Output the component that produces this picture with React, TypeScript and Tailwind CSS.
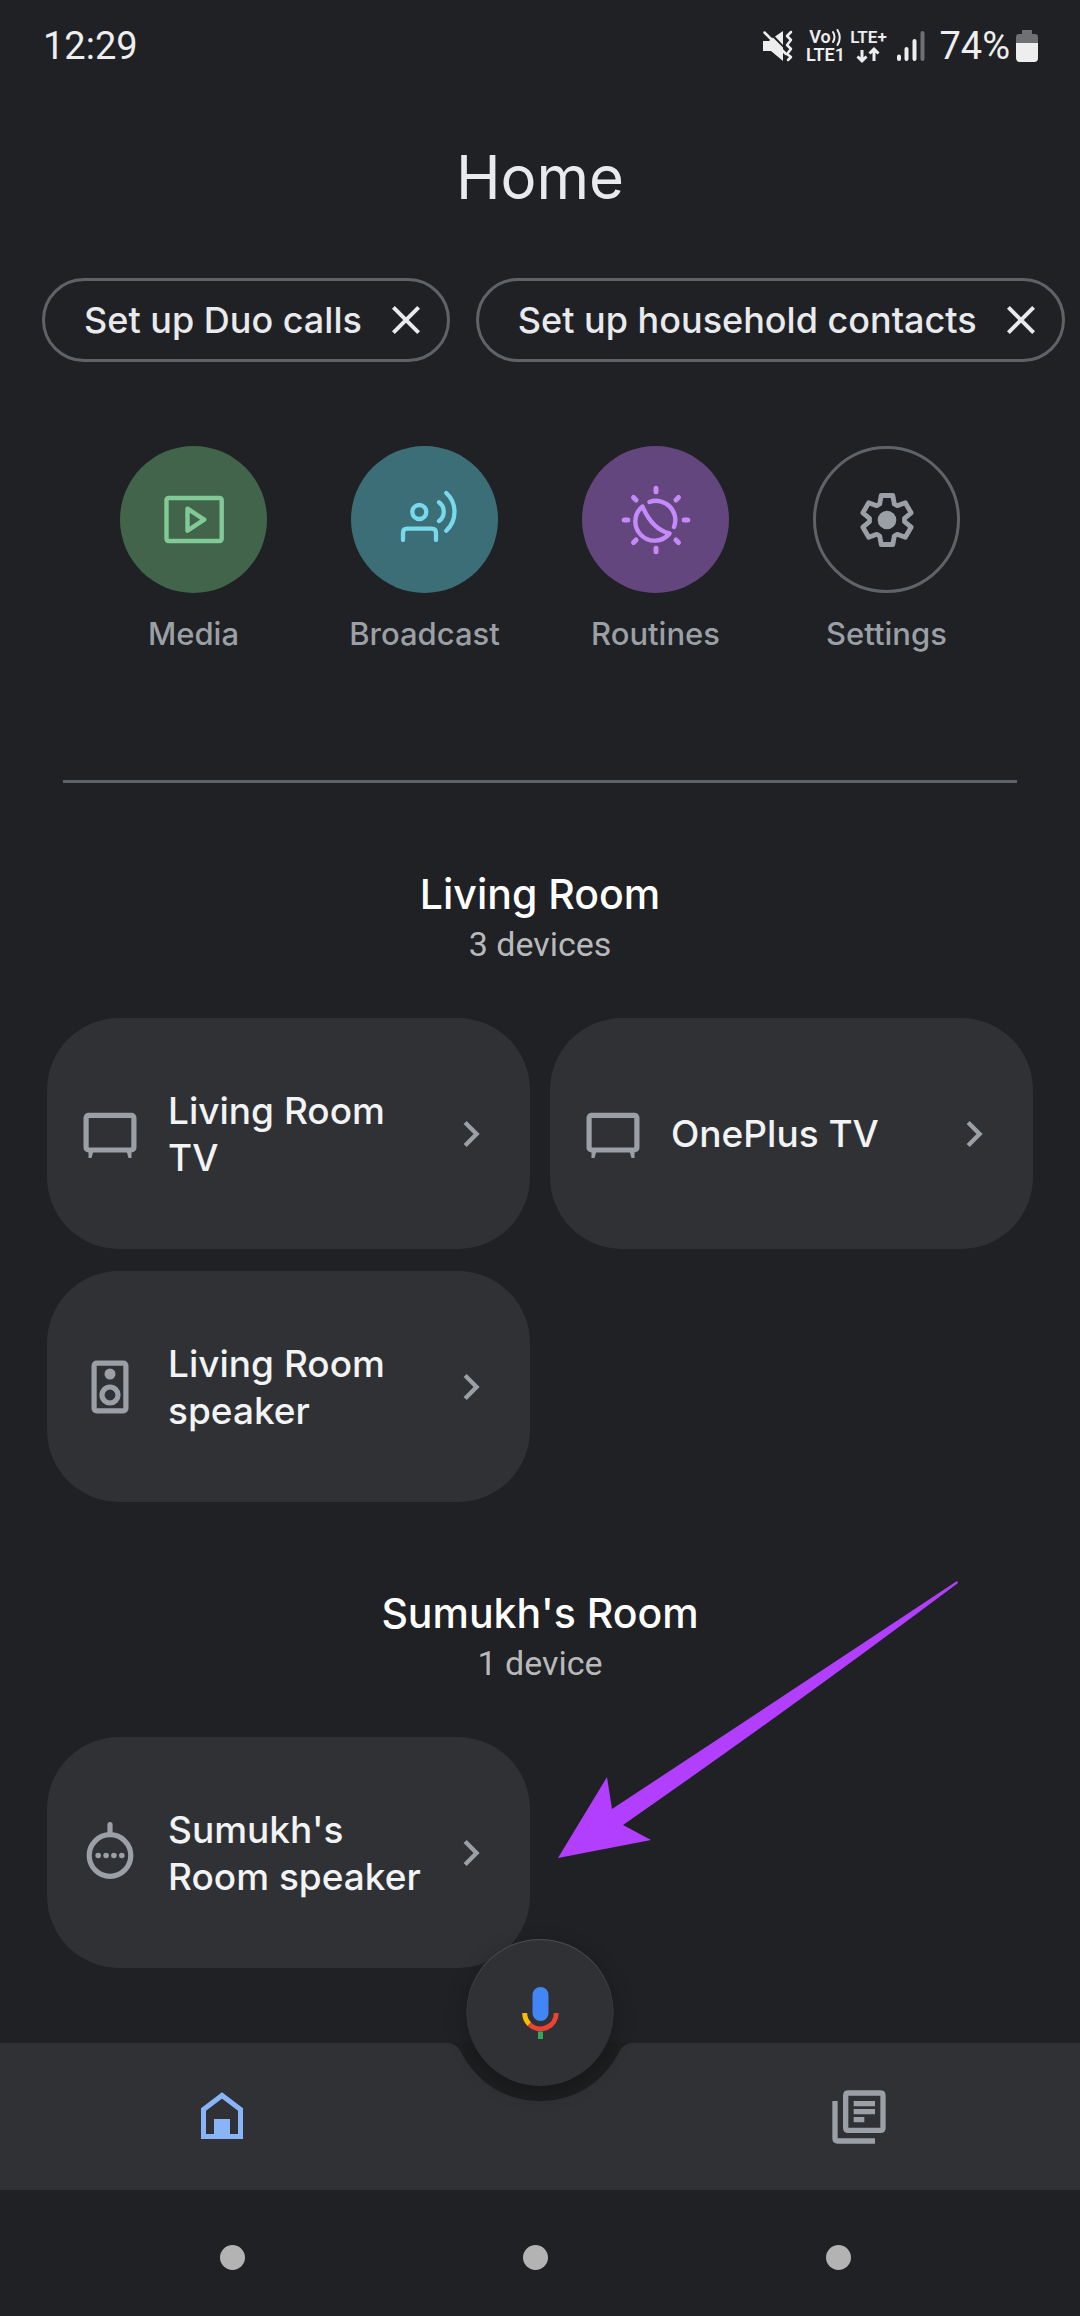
import type { ReactNode } from "react";

const suggestions = ["Set up Duo calls", "Set up household contacts"];

const rooms = [
  {
    name: "Living Room",
    count: "3 devices",
    devices: [
      { name: "Living Room TV", icon: <TvIcon /> },
      { name: "OnePlus TV", icon: <TvIcon /> },
      { name: "Living Room speaker", icon: <SpeakerIcon /> },
    ],
  },
  {
    name: "Sumukh's Room",
    count: "1 device",
    devices: [{ name: "Sumukh's Room speaker", icon: <MiniSpeakerIcon /> }],
  },
];

export default function App() {
  return (
    <div className="flex min-h-screen flex-col bg-[#202124] font-['Inter','Liberation_Sans',sans-serif] text-[#e8eaed]">
      <StatusBar />
      <main className="flex-1 overflow-hidden pb-[74px]">
        <h1 className="mt-12 text-center text-[60px] leading-[74px] font-normal">Home</h1>

        <div className="mt-16 flex gap-[26px] overflow-hidden pl-[42px]">
          {suggestions.map((label) => (
            <Suggestion key={label} label={label} />
          ))}
        </div>

        <div className="mt-[84px] flex justify-center gap-[84px]">
          <Action label="Media" circle="bg-[#41644a] text-[#81c995]">
            <MediaIcon />
          </Action>
          <Action label="Broadcast" circle="bg-[#3c6e78] text-[#78d9ec]">
            <BroadcastIcon />
          </Action>
          <Action label="Routines" circle="bg-[#64467f] text-[#c58af9]">
            <RoutinesIcon />
          </Action>
          <Action label="Settings" circle="border-[3px] border-[#5f6368] text-[#9aa0a6]">
            <SettingsIcon />
          </Action>
        </div>

        <hr className="mx-[63px] mt-[126px] border-t-[3px] border-[#5f6368]" />

        {rooms.map((room) => (
          <section key={room.name} className="relative mt-[87px] px-[47px]">
            <h2 className="text-center text-[41px] leading-[48px] font-medium text-white">
              {room.name}
            </h2>
            <p className="mt-[6px] text-center font-['Roboto',sans-serif] text-[34px] leading-[40px] text-[#b8b9ba]">
              {room.count}
            </p>
            <div className="mt-[54px] grid grid-cols-2 gap-x-[20px] gap-y-[22px]">
              {room.devices.map((device) => (
                <DeviceCard key={device.name} name={device.name} icon={device.icon} />
              ))}
            </div>
            {room.devices.length === 1 && <Pointer />}
          </section>
        ))}
      </main>
      <TabBar />
      <SystemNav />
    </div>
  );
}

function StatusBar() {
  return (
    <header className="flex h-[92px] items-center justify-between pr-[42px] pl-[43px] font-['Roboto',sans-serif] text-[38px] text-[#eeeeee]">
      <time>12:29</time>
      <div className="flex items-center">
        <svg width="32" height="32" viewBox="0 0 32 32" fill="none" aria-label="Vibrate">
          <path d="M1 11h6l4-3.500L21 17.500V31L9 21H1z" fill="currentColor" />
          <path d="M13 6.500L21 1v14z" fill="currentColor" />
          <path d="M2.500 2.500L24 24" stroke="currentColor" strokeWidth="2.500" strokeLinecap="round" />
          <path
            d="M29 2l-4 4 4 4-4 5 4 4-4 5 4 3-3 3"
            stroke="currentColor"
            strokeWidth="2.500"
            strokeLinecap="round"
            strokeLinejoin="round"
          />
        </svg>
        <div className="ml-[11px] flex w-[40px] flex-col items-center text-[18px] leading-[18px] font-semibold">
          <span className="flex items-center gap-px">
            Vo
            <svg width="10" height="17" viewBox="0 0 10 17" fill="none" aria-hidden="true">
              <path
                d="M1 3q3 5 0 10M5.500 1q4.500 7.500 0 15"
                stroke="currentColor"
                strokeWidth="2"
                strokeLinecap="round"
              />
            </svg>
          </span>
          <span>LTE1</span>
        </div>
        <div className="ml-1 flex w-[38px] flex-col items-center text-[17px] leading-[18px] font-semibold">
          <span>LTE+</span>
          <svg width="24" height="18" viewBox="0 0 24 18" fill="none" aria-hidden="true">
            <path
              d="M6 4v11M1.500 10.500L6 15l4.500-4.500M18 15V3M13.500 7.500L18 3l4.500 4.500"
              stroke="currentColor"
              strokeWidth="3"
            />
          </svg>
        </div>
        <svg className="ml-[9px]" width="29" height="32" viewBox="0 0 29 32" fill="none" aria-label="Signal">
          <path
            d="M3 26.500V29M10.500 19V29M18.500 11V29"
            stroke="currentColor"
            strokeWidth="4"
            strokeLinecap="round"
          />
          <path d="M26.500 3V29" stroke="#6f7073" strokeWidth="4" strokeLinecap="round" />
        </svg>
        <span className="ml-[14px]">74%</span>
        <svg className="ml-[6px]" width="22" height="34" viewBox="0 0 22 34" aria-label="Battery">
          <path d="M6 1h10v4h3q3 0 3 3v6H0V8q0-3 3-3h3z" fill="#6f7073" />
          <path d="M0 14h22v15q0 4-4 4H4q-4 0-4-4z" fill="currentColor" />
        </svg>
      </div>
    </header>
  );
}

function Suggestion({ label }: { label: string }) {
  return (
    <div className="flex h-[84px] shrink-0 items-center gap-5 rounded-full border-[3px] border-[#5f6368] pr-[17px] pl-[39px]">
      <button className="text-[36px] leading-[48px] font-medium whitespace-nowrap">{label}</button>
      <button aria-label={`Dismiss ${label}`}>
        <svg width="48" height="48" viewBox="0 0 24 24" fill="none" stroke="currentColor" strokeWidth="2">
          <path d="M5.700 5.700l12.600 12.600M18.300 5.700L5.700 18.300" />
        </svg>
      </button>
    </div>
  );
}

function Action({ label, circle, children }: { label: string; circle: string; children: ReactNode }) {
  return (
    <button className="flex w-[147px] flex-col items-center">
      <span className={`flex size-[147px] items-center justify-center rounded-full ${circle}`}>{children}</span>
      <span className="mt-[21px] text-[31px] leading-[40px] font-medium text-[#9aa0a6]">{label}</span>
    </button>
  );
}

function DeviceCard({ name, icon }: { name: string; icon: ReactNode }) {
  return (
    <button className="flex h-[231px] items-center rounded-[72px] bg-[#303134] pr-[33px] pl-[31px] text-left">
      <span className="shrink-0 text-[#9aa0a6]">{icon}</span>
      <span className="ml-[26px] flex-1 pr-2 text-[37px] leading-[47px] font-medium text-[#f1f3f4]">{name}</span>
      <svg className="shrink-0 text-[#9aa0a6]" width="52" height="52" viewBox="0 0 24 24" fill="currentColor">
        <path d="M10 6L8.590 7.410 13.170 12l-4.580 4.590L10 18l6-6z" />
      </svg>
    </button>
  );
}

// Arrow that points at the only device of the room.
function Pointer() {
  return (
    <svg
      className="pointer-events-none absolute top-[-8px] left-[558px]"
      width="401"
      height="278"
      viewBox="0 0 401 278"
      fill="#b23fff"
      aria-hidden="true"
    >
      <path d="M0 277L49 196L54 228Q230 112 399 0L400 2Q240 122 65 244L93 259z" />
    </svg>
  );
}

function TabBar() {
  return (
    <nav className="relative flex h-[147px] gap-[194px] bg-[#303134]">
      <button className="flex flex-1 items-center justify-center text-[#8ab4f8]" aria-label="Home">
        <svg width="64" height="64" viewBox="0 0 64 64" fill="none">
          <path d="M13.500 24.500L32 10.500l18.500 14V51.500h-37z" stroke="currentColor" strokeWidth="5" />
          <path d="M24 34h16v18H24z" fill="currentColor" />
        </svg>
      </button>
      <button className="flex flex-1 items-center justify-center text-[#9aa0a6]" aria-label="Feed">
        <svg width="64" height="64" viewBox="0 0 24 24" fill="currentColor">
          <path d="M4 6H2v14q0 2 2 2h14v-2H4z" />
          <path
            fillRule="evenodd"
            d="M8 2h12q2 0 2 2v12q0 2-2 2H8q-2 0-2-2V4q0-2 2-2zm0 2v12h12V4z"
          />
          <path d="M10 6h8v2h-8zM10 9h8v2h-8zM10 12h4v2h-4z" />
        </svg>
      </button>
      <svg
        className="absolute top-0 left-1/2 -translate-x-1/2"
        width="184"
        height="60"
        viewBox="0 0 184 60"
        fill="#1d1e20"
        aria-hidden="true"
      >
        <path d="M0 0H184Q176 0 171 9A88 88 0 0 1 13 9Q8 0 0 0z" />
      </svg>
      <button
        className="absolute -top-[104px] left-1/2 flex size-[147px] -translate-x-1/2 items-center justify-center rounded-full bg-[#303134] shadow-[inset_0_1px_1px_rgba(255,255,255,0.15),0_6px_20px_rgba(0,0,0,0.25)]"
        aria-label="Talk to Assistant"
      >
        <svg width="64" height="64" viewBox="0 0 64 64" fill="none">
          <rect x="24" y="6" width="16" height="34" rx="8" fill="#4285f4" />
          <path d="M16.200 32A15.800 15.800 0 0 0 20.800 43.200" stroke="#fbbc04" strokeWidth="5" />
          <path d="M20.800 43.200A15.800 15.800 0 0 0 47.800 32" stroke="#ea4335" strokeWidth="5" />
          <path d="M29.500 50.500h5V58h-5z" fill="#34a853" />
        </svg>
      </button>
    </nav>
  );
}

function SystemNav() {
  return (
    <footer className="flex h-[126px] items-center justify-between pt-2 pr-[229px] pl-[220px]">
      <button className="size-[25px] rounded-full bg-[#b3b3b3]" aria-label="Recents" />
      <button className="size-[25px] rounded-full bg-[#b3b3b3]" aria-label="Home screen" />
      <button className="size-[25px] rounded-full bg-[#b3b3b3]" aria-label="Back" />
    </footer>
  );
}

/* Icons, all drawn around a 0,0 centre */

function MediaIcon() {
  return (
    <svg width="72" height="72" viewBox="-36 -36 72 72" fill="none" stroke="currentColor" strokeWidth="4.400">
      <rect x="-27.500" y="-22" width="55.200" height="43" rx="2" />
      <path d="M-6.500-11.300L10.200-.3-6.500 10.700z" strokeLinejoin="round" />
    </svg>
  );
}

function BroadcastIcon() {
  return (
    <svg
      width="72"
      height="72"
      viewBox="-36 -36 72 72"
      fill="none"
      stroke="currentColor"
      strokeWidth="4.300"
      strokeLinecap="round"
    >
      <circle cx="-5.700" cy="-8" r="7" />
      <path d="M-22 20V13Q-22 8.700-17.700 8.700H6.700Q11 8.700 11 13V20" />
      <path d="M14-17.700A11.600 11.600 0 0 1 14 1M21.300-27A25.800 25.800 0 0 1 21.300 10.700" />
    </svg>
  );
}

function RoutinesIcon() {
  return (
    <svg
      width="72"
      height="72"
      viewBox="-36 -36 72 72"
      fill="none"
      stroke="currentColor"
      strokeWidth="4.400"
      strokeLinecap="round"
      strokeLinejoin="round"
    >
      <path d="M-6.500-18A19.200 19.200 0 0 1 18 7" />
      <path d="M-13.500-13.500A19.200 19.200 0 1 0 13.500 13.500Q-4 9-13.500-13.500z" />
      {[0, 45, 90, 135, 180, 225, 270, 315].map((angle) => (
        <path key={angle} d="M0-28.200V-31.800" strokeWidth="5" transform={`rotate(${angle})`} />
      ))}
    </svg>
  );
}

function SettingsIcon() {
  return (
    <svg width="72" height="72" viewBox="-36 -36 72 72" fill="none">
      <path
        d="M-7.300-16L-5.800-24.500H5.800L7.300-16 10.200-14.300 18.300-17.300 24.100-7.200 17.500-1.700V1.700L24.100 7.200 18.300 17.300 10.200 14.300 7.300 16 5.800 24.500H-5.800L-7.300 16-10.200 14.300-18.300 17.300-24.100 7.200-17.500 1.700V-1.700L-24.100-7.200-18.300-17.300-10.200-14.300z"
        stroke="currentColor"
        strokeWidth="4.800"
        strokeLinejoin="round"
      />
      <circle r="9.300" fill="currentColor" />
    </svg>
  );
}

function TvIcon() {
  return (
    <svg width="64" height="64" viewBox="-32 -32 64 64" fill="none">
      <rect x="-23.900" y="-18.700" width="47.800" height="34.700" rx="2.500" stroke="currentColor" strokeWidth="5.200" />
      <path d="M-21.500 17h5l-2 7h-3zM21.500 17h-5l2 7h3z" fill="currentColor" />
    </svg>
  );
}

function SpeakerIcon() {
  return (
    <svg width="64" height="64" viewBox="-32 -32 64 64" fill="none" stroke="currentColor" strokeWidth="5.200">
      <rect x="-15.900" y="-23.800" width="31.800" height="47.600" rx="2.500" />
      <circle cy="-13" r="5.500" fill="currentColor" stroke="none" />
      <circle cy="8" r="8" />
    </svg>
  );
}

function MiniSpeakerIcon() {
  return (
    <svg width="64" height="64" viewBox="-32 -32 64 64" fill="none" stroke="currentColor" strokeWidth="5.200">
      <circle cy="2.500" r="20.800" />
      <path d="M0-28.500V-19" strokeLinecap="round" />
      <g fill="currentColor" stroke="none">
        <circle cx="-11.800" cy="2.500" r="2.800" />
        <circle cx="-3.900" cy="2.500" r="2.800" />
        <circle cx="3.900" cy="2.500" r="2.800" />
        <circle cx="11.800" cy="2.500" r="2.800" />
      </g>
    </svg>
  );
}
